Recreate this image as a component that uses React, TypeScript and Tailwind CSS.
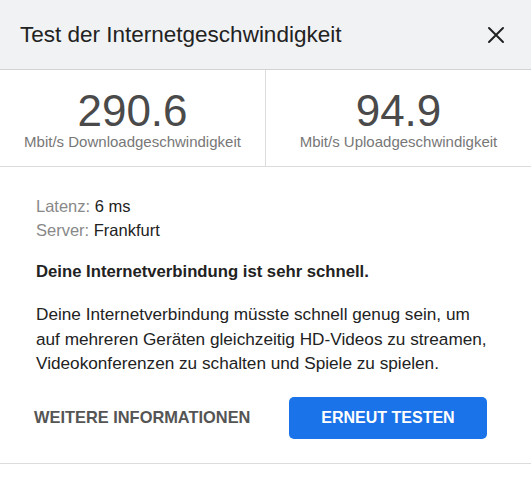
import React from "react";

const font = { fontFamily: '"Liberation Sans", Arial, sans-serif' };

function CloseIcon() {
  return (
    <svg width="18" height="18" viewBox="0 0 18 18" className="text-[#222]">
      <path d="M2 2 L16 16 M16 2 L2 16" stroke="currentColor" strokeWidth="2" strokeLinecap="round" />
    </svg>
  );
}

interface StatProps {
  value: string;
  label: string;
}

const Stat: React.FC<StatProps> = ({ value, label }) => (
  <div className="flex-1 flex flex-col items-center pt-[21px]">
    <div className="text-[44px] leading-[40px] text-[#4a4a4a]">{value}</div>
    <div className="mt-[2px] text-[15px] leading-[18px] text-[#777]">{label}</div>
  </div>
);

export default function App() {
  return (
    <div className="w-[531px] h-[479px] bg-white" style={font}>
      <div className="h-[70px] bg-[#f1f2f4] border-b border-[#d3d3d5] flex items-center justify-between pl-5 pr-[26px]">
        <h1 className="text-[22.5px] text-[#222] pt-[1px]">Test der Internetgeschwindigkeit</h1>
        <CloseIcon />
      </div>

      <div className="flex h-[97px] border-b border-[#dcdcdc]">
        <Stat value="290.6" label="Mbit/s Downloadgeschwindigkeit" />
        <div className="w-px bg-[#dcdcdc]" />
        <Stat value="94.9" label="Mbit/s Uploadgeschwindigkeit" />
      </div>

      <div className="px-9 pt-[27px] border-b border-[#dcdcdc] h-[297px]">
        <div className="text-[16.5px] leading-[24px]">
          <div>
            <span className="text-[#888]">Latenz:</span> <span className="text-[#222]">6 ms</span>
          </div>
          <div>
            <span className="text-[#888]">Server:</span> <span className="text-[#222]">Frankfurt</span>
          </div>
        </div>
        <p className="mt-[18px] text-[16.7px] leading-[24px] font-bold text-[#222]">
          Deine Internetverbindung ist sehr schnell.
        </p>
        <p className="mt-[18px] pr-[5px] text-[17.2px] leading-[24.5px] text-[#222]">
          Deine Internetverbindung müsste schnell genug sein, um auf mehreren Geräten gleichzeitig HD-Videos zu streamen, Videokonferenzen zu schalten und Spiele zu spielen.
        </p>
        <div className="mt-[21px] flex items-center">
          <button className="-ml-[2px] text-[16.4px] font-bold text-[#555]">
            WEITERE INFORMATIONEN
          </button>
          <button className="ml-auto mr-2 w-[198px] h-[42px] rounded-[5px] bg-[#1a73e8] text-white text-[16px] font-bold">
            ERNEUT TESTEN
          </button>
        </div>
      </div>
    </div>
  );
}
